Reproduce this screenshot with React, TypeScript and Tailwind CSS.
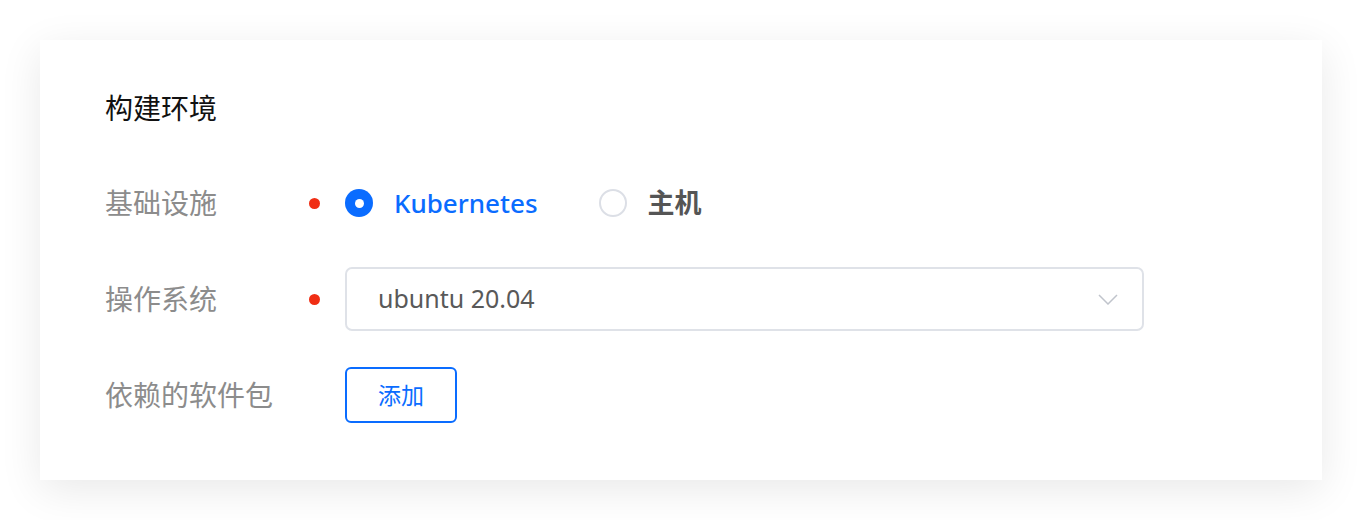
const FONT = '"Noto Sans", "Noto Sans CJK SC", sans-serif';

function Required() {
  return <span className="mr-[25px] block h-[11px] w-[11px] rounded-full bg-[#f02e14]" />;
}

function Radio({ label, checked }: { label: string; checked?: boolean }) {
  return (
    <label className="flex items-center">
      {checked ? (
        <span className="flex h-[28px] w-[28px] items-center justify-center rounded-full bg-[#0a6cff]">
          <span className="h-[9px] w-[9px] rounded-full bg-white" />
        </span>
      ) : (
        <span className="h-[28px] w-[28px] rounded-full border-2 border-[#dcdfe6] bg-white" />
      )}
      <span
        className={
          checked
            ? 'ml-[21px] text-[26px] font-medium text-[#0a6cff]'
            : 'ml-[21px] text-[27px] font-bold text-[#555555]'
        }
      >
        {label}
      </span>
    </label>
  );
}

export default function App() {
  return (
    <div className="min-h-[520px] bg-white p-10" style={{ fontFamily: FONT }}>
      <div className="h-[440px] bg-white px-[65px] pt-[40px] shadow-[0_10px_40px_rgba(0,0,0,0.09)]">
        <div className="flex h-[56px] items-center text-[28px] text-[#111111]">构建环境</div>

        <div className="mt-[35px] flex h-[64px] items-center">
          <div className="w-[204px] text-[28px] text-[#8c8c8c]">基础设施</div>
          <Required />
          <div className="flex items-center gap-[61px]">
            <Radio label="Kubernetes" checked />
            <Radio label="主机" />
          </div>
        </div>

        <div className="mt-[32px] flex h-[64px] items-center">
          <div className="w-[204px] text-[28px] text-[#8c8c8c]">操作系统</div>
          <Required />
          <div className="flex h-[64px] w-[799px] items-center justify-between rounded-[7px] border-2 border-[#dfe2e8] pl-[31px] pr-[24px]">
            <span className="text-[25px] text-[#595959]">ubuntu 20.04</span>
            <svg width="20" height="11" viewBox="0 0 20 11" fill="none">
              <path d="M1 1l9 9 9-9" stroke="#c0c4cc" strokeWidth="1.5" />
            </svg>
          </div>
        </div>

        <div className="mt-[32px] flex h-[64px] items-center">
          <div className="w-[240px] text-[28px] text-[#8c8c8c]">依赖的软件包</div>
          <button className="flex h-[56px] w-[112px] items-center justify-center rounded-[6px] border-2 border-[#0a6cff] bg-white text-[23px] text-[#0a6cff]">
            添加
          </button>
        </div>
      </div>
    </div>
  );
}
